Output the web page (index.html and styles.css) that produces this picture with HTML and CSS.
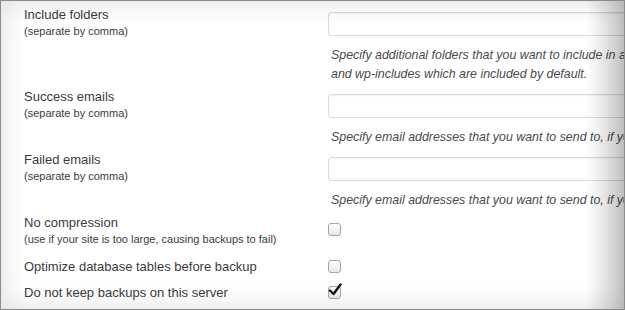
FILE: index.html
```html
<!DOCTYPE html>
<html lang="en">

<head>
    <meta charset="UTF-8">
    <title>Backup Settings</title>
    <link rel="stylesheet" href="styles.css">
</head>

<body>
    <div class="frame">
        <div class="form">
            <div class="row">
                <div class="label">Include folders<small>(separate by comma)</small></div>
                <div class="field">
                    <input type="text" class="input-text" />
                    <p class="desc">Specify additional folders that you want to include in addition to wp-content, wp-admin<br>
                        and wp-includes which are included by default.</p>
                </div>
            </div>
            <div class="row">
                <div class="label">Success emails<small>(separate by comma)</small></div>
                <div class="field">
                    <input type="text" class="input-text" />
                    <p class="desc">Specify email addresses that you want to send to, if you want</p>
                </div>
            </div>
            <div class="row">
                <div class="label">Failed emails<small>(separate by comma)</small></div>
                <div class="field">
                    <input type="text" class="input-text" />
                    <p class="desc">Specify email addresses that you want to send to, if you want</p>
                </div>
            </div>
            <div class="row check-row first-check">
                <div class="label">No compression<small>(use if your site is too large, causing backups to fail)</small></div>
                <div class="field"><span class="checkbox"></span></div>
            </div>
            <div class="row check-row">
                <div class="label">Optimize database tables before backup</div>
                <div class="field"><span class="checkbox"></span></div>
            </div>
            <div class="row check-row last-check">
                <div class="label">Do not keep backups on this server</div>
                <div class="field">
                    <span class="checkbox checked">
                        <svg width="14" height="14" viewBox="0 0 14 14">
                            <path d="M2 7.5 L5.5 11 L12.5 1.5" fill="none" stroke="#111" stroke-width="2.4" stroke-linejoin="round" stroke-linecap="round" />
                        </svg>
                    </span>
                </div>
            </div>
        </div>
        <div class="shade"></div>
    </div>
</body>

</html>
```

FILE: styles.css
```css
body {
    margin: 0px;
    padding: 0px;
    background-color: #ffffff;
    font-family: "Liberation Sans", Arial, sans-serif;
}

.frame {
    position: relative;
    width: 625px;
    height: 310px;
    box-sizing: border-box;
    border: 1px solid #8c8c8c;
    background-color: #ffffff;
    overflow: hidden;
}

.form {
    padding: 5px 0 0 23px;
    display: flex;
    flex-direction: column;
}

.row {
    display: grid;
    grid-template-columns: 304px 1fr;
    align-items: start;
    margin-bottom: 4px;
}

.label {
    font-size: 13px;
    line-height: 18px;
    color: #3b3b3b;
    display: flex;
    flex-direction: column;
}

.label small {
    font-size: 11px;
    line-height: 15px;
    color: #3b3b3b;
    white-space: nowrap;
}

.field {
    padding-top: 6px;
    white-space: nowrap;
    overflow: hidden;
}

.input-text {
    display: block;
    width: 320px;
    height: 24px;
    box-sizing: border-box;
    margin: 0;
    border: 1px solid #dcdcdc;
    border-radius: 3px;
    box-shadow: inset 0 1px 2px rgba(0, 0, 0, 0.06);
    background-color: #ffffff;
}

.desc {
    margin: 10px 0 0 3px;
    font-size: 12.4px;
    line-height: 19px;
    font-style: italic;
    color: #4a4a4a;
}

.check-row {
    align-items: center;
}

.check-row .field {
    padding-top: 0;
    overflow: visible;
}

.first-check {
    margin-bottom: 11px;
}

.last-check {
    margin-top: 4px;
}

.checkbox {
    position: relative;
    display: block;
    width: 11px;
    height: 11px;
    margin-top: -2px;
    border: 1px solid #a4a4a4;
    border-radius: 3px;
    background: linear-gradient(#ffffff, #e8e8e8);
}

.checkbox svg {
    position: absolute;
    left: -1px;
    top: -4px;
}

.shade {
    position: absolute;
    inset: 0;
    pointer-events: none;
    box-shadow: inset 0 0 28px rgba(0, 0, 0, 0.14);
    background: linear-gradient(to right, rgba(0, 0, 0, 0) 94%, rgba(0, 0, 0, 0.2) 100%);
}
```
